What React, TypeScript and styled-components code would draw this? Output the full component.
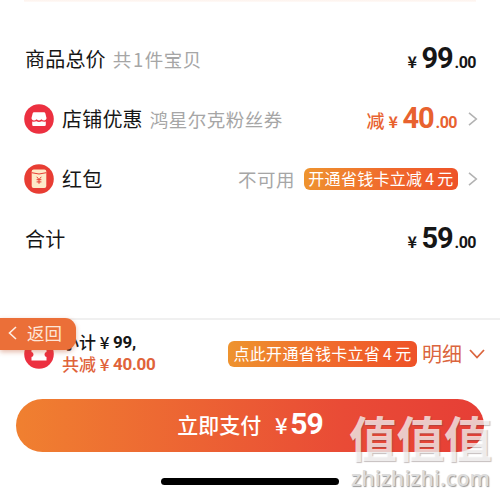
import React from "react";
import styled, { createGlobalStyle } from "styled-components";

const Global = createGlobalStyle`
  * { box-sizing: border-box; }
  body { margin: 0; background: #fff; }
`;

const cjk = `"Noto Sans CJK SC", sans-serif`;

const Screen = styled.main`
  position: relative;
  display: flex;
  flex-direction: column;
  width: 500px;
  height: 495px;
  overflow: hidden;
  background: #fff;
  color: #161616;
  white-space: nowrap;
  font-family: ${cjk};
`;

const TopEdge = styled.div`
  height: 2px;
  margin: 0 24px;
  background: linear-gradient(#fdf3ed, #fffaf7);
`;

const Rows = styled.section`
  height: 316px;
  padding: 27px 22px 0 25px;
`;

const Row = styled.div`
  display: flex;
  align-items: center;
  height: 60px;
`;

const Badge = styled.svg`
  width: 30px;
  height: 30px;
  flex: none;
  margin: 0 8px 0 -1px;
`;

const Label = styled.span`
  font-size: 20px;
  line-height: 30px;
  letter-spacing: 0.2px;
`;

const Note = styled.span<{ $push?: boolean }>`
  margin-left: ${(p) => (p.$push ? "auto" : "7px")};
  margin-right: ${(p) => (p.$push ? "9px" : "0")};
  color: #a6a6a6;
  font-size: 18.5px;
  line-height: 30px;
  letter-spacing: 0.5px;
`;

const Count = styled.span`
  display: inline-block;
  width: 13px;
  text-align: center;
`;

const PriceBox = styled.span<{ $accent?: boolean; $last?: boolean }>`
  display: flex;
  align-items: baseline;
  margin-left: auto;
  margin-right: ${(p) => (p.$last ? 2 : 1)}px;
  height: 32px;
  line-height: 30px;
  color: ${(p) => (p.$accent ? "#e8622f" : "#161616")};
`;

const Prefix = styled.span`
  margin-right: 4px;
  font-size: 18px;
  font-weight: 500;
`;

const Yen = styled.span`
  width: 10px;
  margin-right: 4px;
  font: 700 16px/30px ${cjk};
`;

const Whole = styled.span`
  font: 700 29px/30px Roboto, sans-serif;
  letter-spacing: -1.1px;
`;

const Cents = styled.span`
  margin-left: 2px;
  font: 700 16px/30px Roboto, sans-serif;
  letter-spacing: -0.5px;
`;

const Chevron = styled.svg`
  width: 10px;
  height: 14px;
  flex: none;
  margin-left: 10px;
  fill: none;
  stroke: #b2b2b2;
  stroke-width: 1.6;
`;

const Promo = styled.span<{ $large?: boolean }>`
  display: flex;
  align-items: center;
  justify-content: center;
  width: ${(p) => (p.$large ? 189 : 154)}px;
  height: ${(p) => (p.$large ? 26 : 22)}px;
  padding-bottom: 2px;
  border-radius: 6px;
  background: linear-gradient(100deg, #ee942f, #f0692c 55%, #ee5228);
  color: #fff;
  font-size: 16px;
  line-height: 20px;
  letter-spacing: 0.3px;
  word-spacing: -1px;
`;

const Summary = styled.section`
  display: flex;
  align-items: center;
  height: 81px;
  padding: 0 15px 11px 25px;
  border-top: 2px solid #f0f0f0;
`;

const Totals = styled.div`
  display: flex;
  flex-direction: column;
  margin-right: auto;
  padding-bottom: 2px;
  font-weight: 500;
  font-size: 17px;
  line-height: 22px;
`;

const TotalLine = styled.span<{ $accent?: boolean }>`
  display: flex;
  height: 22px;
  color: ${(p) => (p.$accent ? "#e0633a" : "#161616")};
`;

const Figure = styled.span`
  font: 700 17px/23px Roboto, sans-serif;
  letter-spacing: -0.3px;
`;

const TotalYen = styled.span`
  width: 17px;
  text-align: center;
`;

const Details = styled.span`
  display: flex;
  align-items: center;
  gap: 7px;
  margin-left: 5px;
  color: #db653e;
  font-size: 20px;
  line-height: 28px;
`;

const DownArrow = styled.svg`
  width: 16px;
  height: 10px;
  fill: none;
  stroke: #db653e;
  stroke-width: 1.8;
`;

const PayButton = styled.button`
  display: flex;
  align-items: center;
  justify-content: center;
  flex: none;
  width: 468px;
  height: 53px;
  margin: 0 16px;
  padding: 0 0 3px;
  border: 0;
  border-radius: 27px;
  background: linear-gradient(90deg, #f08030, #e94b36 70%, #e63e36);
  color: #fff;
  font-family: inherit;
  font-size: 21px;
  font-weight: 500;
`;

const PayAmount = styled.span`
  display: flex;
  align-items: baseline;
  margin-left: 10px;
  font: 700 30px/34px Roboto, sans-serif;
  letter-spacing: -1px;
`;

const PayYen = styled.span`
  width: 19px;
  font: 500 22px/34px ${cjk};
`;

const HomeBar = styled.div`
  width: 178px;
  height: 7px;
  margin: 26px auto 0;
  border-radius: 4px;
  background: #000;
`;

const Back = styled.div`
  position: absolute;
  left: 0;
  top: 318px;
  display: flex;
  align-items: center;
  width: 76px;
  height: 32px;
  padding: 0 0 2px 8px;
  border-radius: 0 11px 11px 0;
  background: #eb6f38;
  box-shadow: 0 2px 5px rgba(190, 80, 40, 0.4);
  color: #fde6d9;
  font-size: 17.5px;
  line-height: 28px;
`;

const BackArrow = styled.svg`
  width: 9px;
  height: 14px;
  margin-right: 10px;
  fill: none;
  stroke: #fdeee4;
  stroke-width: 1.6;
`;

const Watermark = styled.div`
  position: absolute;
  left: 349px;
  top: 409px;
  display: flex;
  flex-direction: column;
  width: 148px;
`;

const MarkName = styled.div`
  height: 56px;
  color: rgba(255, 255, 255, 0.72);
  font-size: 48px;
  font-weight: 700;
  line-height: 54px;
  letter-spacing: -0.5px;
  text-shadow: 1px 1px 1px rgba(90, 70, 70, 0.35);
`;

const MarkSite = styled.div`
  padding-left: 2px;
  color: #dcdcdc;
  font: 600 21.3px/26px "Open Sans", sans-serif;
  text-shadow: 1px 1px 1px #999;
`;

type PriceProps = { whole: string; accent?: boolean; prefix?: string };

const Price = ({ whole, accent, prefix }: PriceProps) => (
  <PriceBox $accent={accent} $last={!accent}>
    {prefix && <Prefix>{prefix}</Prefix>}
    <Yen>¥</Yen>
    <Whole>{whole}</Whole>
    <Cents>.00</Cents>
  </PriceBox>
);

const More = () => (
  <Chevron viewBox="0 0 10 14">
    <path d="M1 .8 8.3 7 1 13.2" />
  </Chevron>
);

const ShopIcon = () => (
  <Badge viewBox="0 0 30 30">
    <circle cx="15" cy="15" r="14.8" fill="#ec3040" />
    <path d="M10 8.3h10q1 0 1.3 1l1.2 4.8c0 2.7-3.3 3.2-5 1.2-1.2 1.5-3.8 1.5-5 0-1.7 2-5 1.5-5-1.2L8.7 9.3q.3-1 1.3-1z" fill="#fff" />
    <path d="M8.2 17.6c2 .5 3.1.1 4.2-.3 1.6.9 3.6.9 5.200 0 1.100.4 2.200.8 4.200.3v3.200q0 1.200-1.200 1.200H9.400q-1.200 0-1.200-1.200z" fill="#fff" />
  </Badge>
);

const EnvelopeIcon = () => (
  <Badge viewBox="0 0 30 30">
    <circle cx="15" cy="15" r="14.8" fill="#e83d33" />
    <rect x="7.7" y="5.5" width="14.6" height="18.4" rx="2" fill="#fdebc8" />
    <path d="M7.7 8.7q7.3 2.6 14.6 0" fill="none" stroke="#e83d33" strokeWidth="1" />
    <path d="m12.7 12.8 2.3 2.7 2.3-2.7M12.6 15.7h4.8M12.6 17.9h4.8M15 15.6v4.2" fill="none" stroke="#e83d33" strokeWidth="1" />
  </Badge>
);

const CouponIcon = () => (
  <Badge viewBox="0 0 30 30">
    <circle cx="15" cy="15" r="14.8" fill="#ec3040" />
    <path d="M7.5 9.5h15v3.5a2.5 2.5 0 0 0 0 4.9v3.6h-15v-3.6a2.5 2.5 0 0 0 0-4.9z" fill="#fff" />
  </Badge>
);

export default function App() {
  return (
    <Screen>
      <Global />
      <TopEdge />
      <Rows>
        <Row>
          <Label>商品总价</Label>
          <Note>
            共<Count>1</Count>件宝贝
          </Note>
          <Price whole="99" />
        </Row>
        <Row>
          <ShopIcon />
          <Label>店铺优惠</Label>
          <Note>鸿星尔克粉丝券</Note>
          <Price whole="40" prefix="减" accent />
          <More />
        </Row>
        <Row>
          <EnvelopeIcon />
          <Label>红包</Label>
          <Note $push>不可用</Note>
          <Promo>开通省钱卡立减 4 元</Promo>
          <More />
        </Row>
        <Row>
          <Label>合计</Label>
          <Price whole="59" />
        </Row>
      </Rows>
      <Summary>
        <CouponIcon />
        <Totals>
          <TotalLine>
            小计<TotalYen>¥</TotalYen>
            <Figure>99,</Figure>
          </TotalLine>
          <TotalLine $accent>
            共减<TotalYen>¥</TotalYen>
            <Figure>40.00</Figure>
          </TotalLine>
        </Totals>
        <Promo $large>点此开通省钱卡立省 4 元</Promo>
        <Details>
          明细
          <DownArrow viewBox="0 0 16 10">
            <path d="m1 1 7 7.5L15 1" />
          </DownArrow>
        </Details>
      </Summary>
      <PayButton>
        立即支付
        <PayAmount>
          <PayYen>¥</PayYen>59
        </PayAmount>
      </PayButton>
      <HomeBar />
      <Back>
        <BackArrow viewBox="0 0 9 14">
          <path d="M8 1 1.5 7 8 13" />
        </BackArrow>
        返回
      </Back>
      <Watermark>
        <MarkName>值值值</MarkName>
        <MarkSite>zhizhizhi.com</MarkSite>
      </Watermark>
    </Screen>
  );
}
